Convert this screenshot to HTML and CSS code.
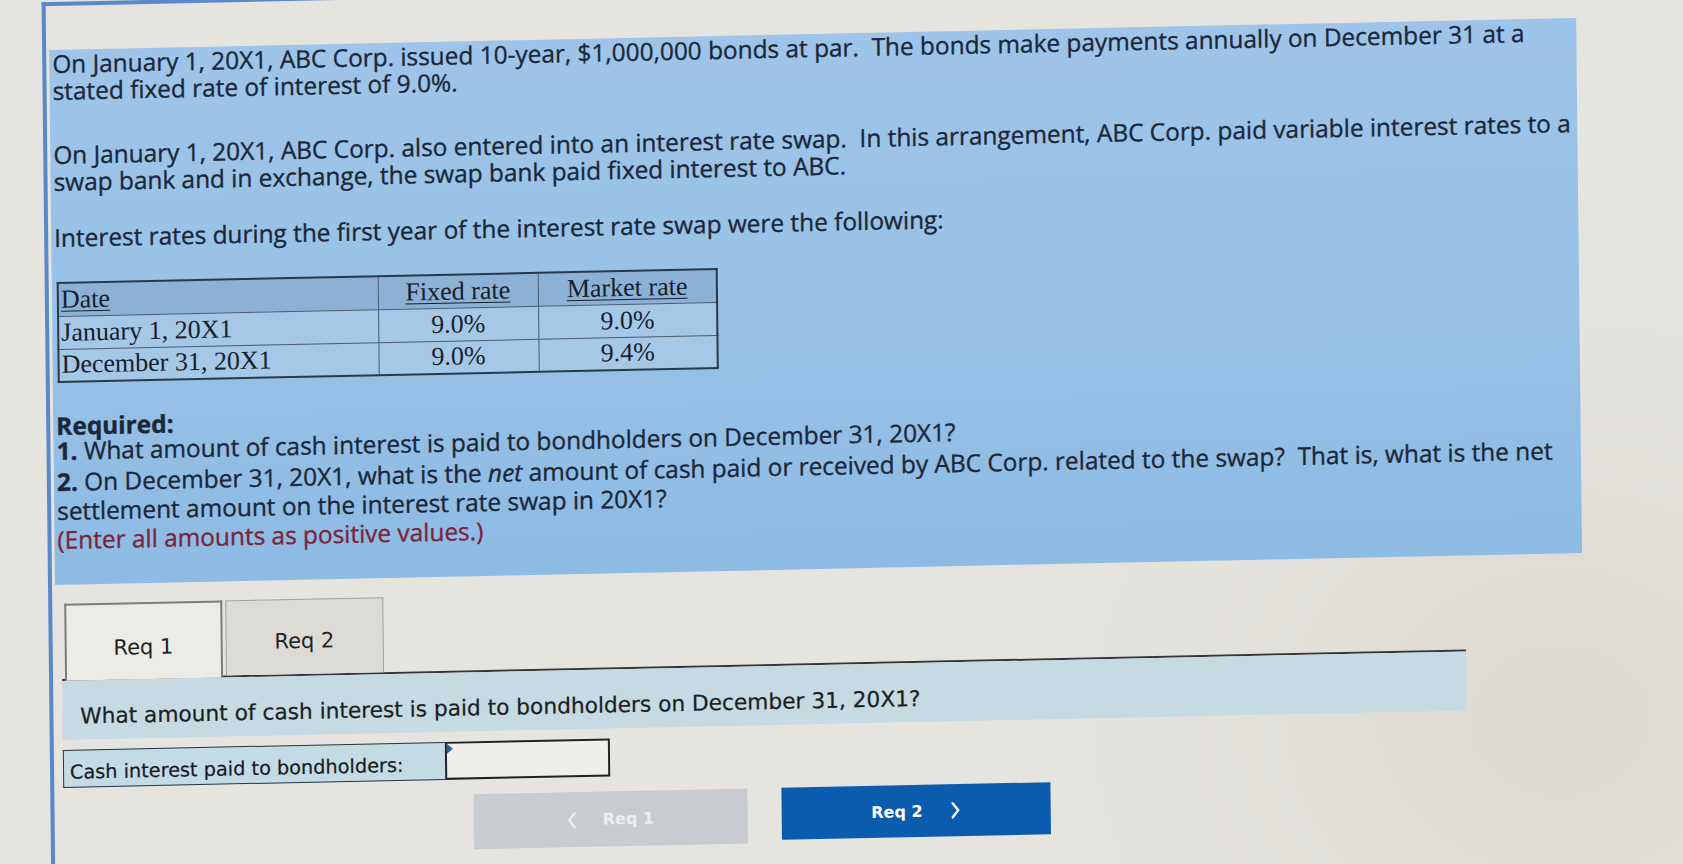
FILE: index.html
```html
<!DOCTYPE html>
<html lang="en">
<head>
<meta charset="utf-8">
<title>Interest rate swap</title>
<link rel="stylesheet" href="styles.css">
</head>
<body>
<div class="screen">
  <div class="frame">
    <section class="panel">
      <p class="para para-1">On January 1, 20X1, ABC Corp. issued 10-year, $1,000,000 bonds at par.&nbsp; The bonds make payments annually on December 31 at a<br>stated fixed rate of interest of 9.0%.</p>
      <p class="para para-2">On January 1, 20X1, ABC Corp. also entered into an interest rate swap.&nbsp; In this arrangement, ABC Corp. paid variable interest rates to a<br>swap bank and in exchange, the swap bank paid fixed interest to ABC.</p>
      <p class="para para-3">Interest rates during the first year of the interest rate swap were the following:</p>
      <table class="rates">
        <thead>
          <tr><th class="col-date">Date</th><th class="col-fixed">Fixed rate</th><th class="col-market">Market rate</th></tr>
        </thead>
        <tbody>
          <tr><td class="col-date">January 1, 20X1</td><td>9.0%</td><td>9.0%</td></tr>
          <tr><td class="col-date">December 31, 20X1</td><td>9.0%</td><td>9.4%</td></tr>
        </tbody>
      </table>
      <p class="req-title">Required:</p>
      <div class="req-list">
        <p class="req-line"><b>1.</b> What amount of cash interest is paid to bondholders on December 31, 20X1?</p>
        <p class="req-line req-gap"><b>2.</b> On December 31, 20X1, what is the <i>net</i> amount of cash paid or received by ABC Corp. related to the swap?&nbsp; That is, what is the net<br>settlement amount on the interest rate swap in 20X1?</p>
        <p class="req-line note">(Enter all amounts as positive values.)</p>
      </div>
    </section>

    <div class="tabs">
      <div class="tab tab-active">Req 1</div>
      <div class="tab">Req 2</div>
    </div>
    <div class="content">
      <div class="question">What amount of cash interest is paid to bondholders on December 31, 20X1?</div>
    </div>
    <div class="answer-row">
      <div class="answer-label">Cash interest paid to bondholders:</div>
      <div class="answer-input"><span class="flag"></span></div>
    </div>
    <div class="nav">
      <div class="btn btn-prev">
        <svg class="chev" viewBox="0 0 10 20" width="10" height="20"><polyline points="8,3 2.5,10 8,17" fill="none" stroke="currentColor" stroke-width="2.4" stroke-linecap="round" stroke-linejoin="round"/></svg>
        <span>Req 1</span>
      </div>
      <div class="btn btn-next">
        <span>Req 2</span>
        <svg class="chev" viewBox="0 0 10 20" width="10" height="20"><polyline points="2,3 7.5,10 2,17" fill="none" stroke="currentColor" stroke-width="2.4" stroke-linecap="round" stroke-linejoin="round"/></svg>
      </div>
    </div>
  </div>
</div>
</body>
</html>
```

FILE: styles.css
```css
html, body {
  margin: 0;
  padding: 0;
}
body {
  width: 1683px;
  height: 864px;
  overflow: hidden;
  background: radial-gradient(ellipse 520px 440px at 1560px 720px, #dcd9d2 0%, #e3e1db 70%, #e6e4de 100%), #e6e4de;
  font-family: "Open Sans", "DejaVu Sans", sans-serif;
  color: #1b2738;
}
/* photo perspective of the screen: slight rotation and lean */
.screen {
  width: 1683px;
  height: 864px;
  transform-origin: 0 0;
  transform: matrix(1, -0.021, 0.011, 1, -4.4, 1.155);
}
.frame {
  margin: 2px 0 0 46px;
  border-left: 4px solid #5b88c8;
  border-top: 4px solid #5b88c8;
  padding: 44px 0 0 3px;
  height: 862px;
  box-sizing: border-box;
}
.panel {
  width: 1527px;
  box-sizing: border-box;
  padding: 0 0 31px 3px;
  background: linear-gradient(180deg, #9ec5e9 0%, #97c1e7 55%, #8dbbe4 100%);
  -webkit-text-stroke: 0.35px currentColor;
}
.para {
  margin: 0;
  font-size: 24.4px;
  line-height: 27px;
  white-space: nowrap;
}
.para-1 { margin-bottom: 37px; }
.para-2 { margin-bottom: 29px; }
.para-3 { margin-bottom: 31px; }
.rates {
  margin-left: 2px;
  border-collapse: collapse;
  font-family: "Liberation Serif", "Times New Roman", serif;
  font-size: 26px;
  color: #18202c;
  border: 2px solid #2a3848;
  -webkit-text-stroke: 0;
}
.rates th, .rates td {
  border: 1.5px solid #4a5a6c;
  height: 33px;
  padding: 0 2px;
  font-weight: normal;
  text-align: center;
  line-height: 30px;
  box-sizing: border-box;
}
.rates th {
  background: #8bb2d6;
  text-decoration: underline;
  text-decoration-thickness: 1px;
  text-underline-offset: 3px;
}
.rates td {
  background: #a5c8e7;
}
.rates .col-date {
  text-align: left;
  width: 320px;
}
.rates .col-fixed { width: 160px; }
.rates .col-market { width: 179px; }
.req-title {
  margin: 31.5px 0 0;
  font-size: 24.4px;
  line-height: 21px;
  font-weight: bold;
}
.req-list {
  font-size: 24.4px;
  line-height: 29px;
}
.req-line {
  margin: 0;
  white-space: nowrap;
}
.req-gap {
  margin-top: 2px;
}
.note {
  color: #7c2438;
}
.tabs {
  display: flex;
  align-items: flex-start;
  margin: 19.5px 0 0 8.7px;
  position: relative;
  z-index: 1;
  height: 74.5px;
}
.tab {
  width: 158px;
  height: 74.5px;
  box-sizing: border-box;
  padding-top: 9px;
  display: flex;
  align-items: center;
  justify-content: center;
  font-family: "DejaVu Sans", Verdana, sans-serif;
  font-size: 21px;
  color: #222;
  background: #dddbd5;
  border: 1.5px solid #a3a29e;
  border-bottom: none;
  margin-right: 3px;
}
.tab-active {
  height: 77px;
  background: #ecebe6;
  border-color: #7b7b78;
  border-width: 2px;
  padding-top: 11px;
}
.content {
  margin-left: 5.7px;
  width: 1404px;
  border-top: 2px solid #343638;
}
.question {
  height: 59px;
  box-sizing: border-box;
  padding: 13px 0 0 18px;
  display: flex;
  align-items: center;
  background: #c5dae2;
  font-family: "DejaVu Sans", Verdana, sans-serif;
  font-size: 21.7px;
  color: #1b1e22;
  white-space: nowrap;
  -webkit-text-stroke: 0.25px currentColor;
}
.answer-row {
  display: flex;
  margin: 10px 0 0 5.9px;
}
.answer-label {
  width: 382px;
  height: 38px;
  box-sizing: border-box;
  padding: 7px 0 0 6px;
  display: flex;
  align-items: center;
  background: #c3dbe5;
  border: 1.5px solid #2b3440;
  border-right: none;
  font-family: "DejaVu Sans", Verdana, sans-serif;
  font-size: 19.3px;
  color: #161a1e;
  white-space: nowrap;
  -webkit-text-stroke: 0.2px currentColor;
}
.answer-input {
  position: relative;
  width: 165px;
  height: 38px;
  box-sizing: border-box;
  background: #efeee9;
  border: 2px solid #1e2226;
}
.flag {
  position: absolute;
  left: 0;
  top: 0;
  width: 0;
  height: 0;
  border-top: 5px solid transparent;
  border-bottom: 5px solid transparent;
  border-left: 6px solid #2d5fae;
}
.nav {
  display: flex;
  align-items: flex-start;
  gap: 34px;
  margin: 15.5px 0 0 415.7px;
}
.btn {
  display: flex;
  align-items: center;
  justify-content: center;
  gap: 26px;
  font-family: "DejaVu Sans", Verdana, sans-serif;
  font-weight: bold;
  font-size: 16px;
}
.btn-prev {
  width: 274px;
  height: 55px;
  background: #c8ccd0;
  color: #eceff1;
}
.btn-next {
  width: 269px;
  height: 52px;
  background: #0b5caf;
  color: #ffffff;
  gap: 28px;
}
.chev {
  display: block;
}
```
